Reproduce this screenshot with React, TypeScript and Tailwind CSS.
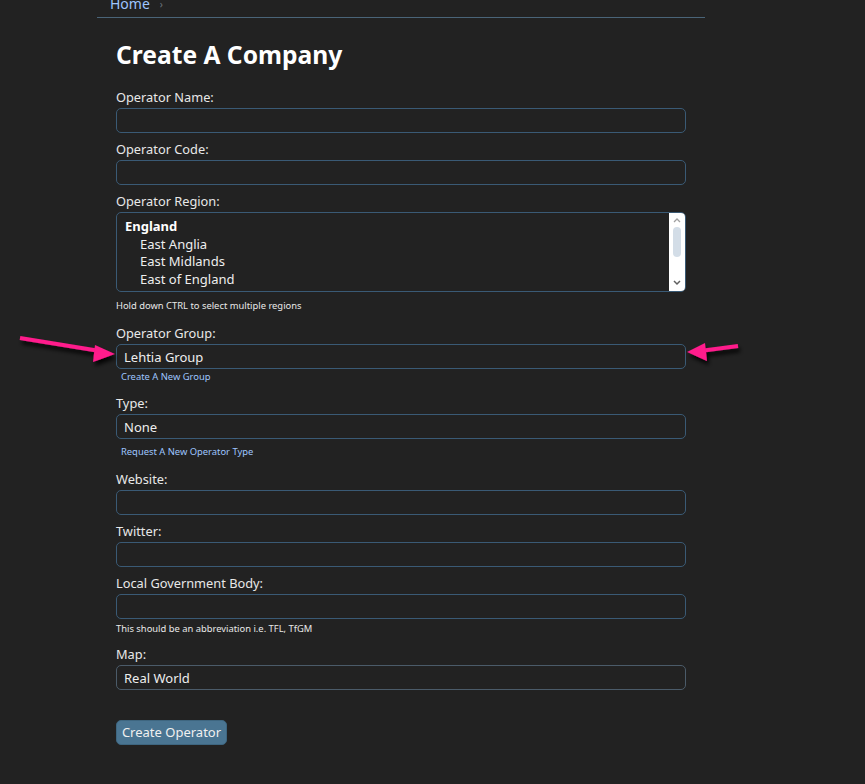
import type { ReactNode } from "react";

const font = { fontFamily: '"Noto Sans", "Open Sans", sans-serif' };

function Label({ children }: { children: ReactNode }) {
	return (
		<div className="h-[18px] text-[12.8px] leading-[18px] text-[#e8e8e8]">
			{children}
		</div>
	);
}

function Field({ value, gray }: { value?: string; gray?: boolean }) {
	return (
		<div
			className={`mt-[2px] h-[25px] w-[570px] rounded-[5px] border px-[7px] pt-[1px] text-[13px] leading-[23px] text-[#eeeeee] ${
				gray ? "border-[#4b5b69]" : "border-[#3a5a75]"
			}`}
		>
			{value}
		</div>
	);
}

function Hint({ children }: { children: ReactNode }) {
	return (
		<div className="h-[12px] text-[9.4px] leading-[12px] text-[#e8e8e8]">
			{children}
		</div>
	);
}

function HelpLink({ children }: { children: ReactNode }) {
	return (
		<div className="h-[12px] pl-[5px] text-[9.4px] leading-[12px] text-[#9ec5fe]">
			{children}
		</div>
	);
}

function Arrows() {
	return (
		<svg
			className="pointer-events-none absolute left-0 top-0"
			width="865"
			height="784"
		>
			<defs>
				<filter id="sh" x="-20%" y="-50%" width="140%" height="200%">
					<feDropShadow dx="2" dy="4" stdDeviation="2" floodColor="#000" floodOpacity="0.9" />
				</filter>
			</defs>
			<g filter="url(#sh)" fill="#ff1a8c" stroke="#ff1a8c">
				<line x1="20" y1="338" x2="100" y2="351" strokeWidth="4" />
				<polygon points="115,354 95,345 93,362" stroke="none" />
				<line x1="738" y1="346" x2="700" y2="351" strokeWidth="4" />
				<polygon points="687,352 705,343 707,361" stroke="none" />
			</g>
		</svg>
	);
}

export default function App() {
	return (
		<div className="relative min-h-screen bg-[#222222]" style={font}>
			<div className="ml-[97px] w-[608px]">
				<div className="h-[18px] overflow-hidden border-b border-[#4a6478]">
					<div className="-mt-[6px] flex items-center gap-[10px] pl-[13px] text-[14px] leading-[20px]">
						<span className="text-[#9ec5fe]">Home</span>
						<span className="text-[10px] text-[#6c757d]">›</span>
					</div>
				</div>

				<div className="pl-[19px]">
					<h1 className="mt-[19px] h-[36px] text-[24.6px] font-bold leading-[36px] text-white">
						Create A Company
					</h1>

					<div className="mt-[15px]">
						<Label>Operator Name:</Label>
						<Field />
					</div>
					<div className="mt-[7px]">
						<Label>Operator Code:</Label>
						<Field />
					</div>
					<div className="mt-[7px]">
						<Label>Operator Region:</Label>
						<div className="mt-[2px] flex h-[80px] w-[570px] overflow-hidden rounded-[5px] border border-[#3a5a75]">
							<div className="flex-1 pl-[8px] pt-[5px] text-[13px] leading-[17.7px] text-[#eeeeee]">
								<div className="font-bold text-white">England</div>
								<div className="pl-[15px]">East Anglia</div>
								<div className="pl-[15px]">East Midlands</div>
								<div className="pl-[15px]">East of England</div>
							</div>
							<div className="flex w-[16px] flex-col items-center bg-white">
								<svg width="10" height="14" viewBox="0 0 10 14">
									<path d="M2 9 L5 6 L8 9" fill="none" stroke="#a0a0a0" strokeWidth="1.3" />
								</svg>
								<div className="h-[30px] w-[8px] rounded-[4px] bg-[#d3dde7]" />
								<div className="flex-1" />
								<svg width="10" height="14" viewBox="0 0 10 14">
									<path d="M2 4 L5 7 L8 4" fill="none" stroke="#606060" strokeWidth="1.5" />
								</svg>
							</div>
						</div>
						<div className="mt-[8px]">
							<Hint>Hold down CTRL to select multiple regions</Hint>
						</div>
					</div>
					<div className="mt-[12px]">
						<Label>Operator Group:</Label>
						<Field value="Lehtia Group" />
						<div className="mt-[2px]">
							<HelpLink>Create A New Group</HelpLink>
						</div>
					</div>
					<div className="mt-[11px]">
						<Label>Type:</Label>
						<Field value="None" />
						<div className="mt-[7px]">
							<HelpLink>Request A New Operator Type</HelpLink>
						</div>
					</div>
					<div className="mt-[12px]">
						<Label>Website:</Label>
						<Field />
					</div>
					<div className="mt-[7px]">
						<Label>Twitter:</Label>
						<Field />
					</div>
					<div className="mt-[7px]">
						<Label>Local Government Body:</Label>
						<Field />
						<div className="mt-[4px]">
							<Hint>This should be an abbreviation i.e. TFL, TfGM</Hint>
						</div>
					</div>
					<div className="mt-[10px]">
						<Label>Map:</Label>
						<Field value="Real World" gray />
					</div>

					<button className="mt-[30px] h-[25px] w-[111px] rounded-[5px] border border-[#3e6680] bg-[#4a7592] text-[13px] leading-[23px] text-[#f0f0f0]">
						Create Operator
					</button>
				</div>
			</div>
			<Arrows />
		</div>
	);
}
